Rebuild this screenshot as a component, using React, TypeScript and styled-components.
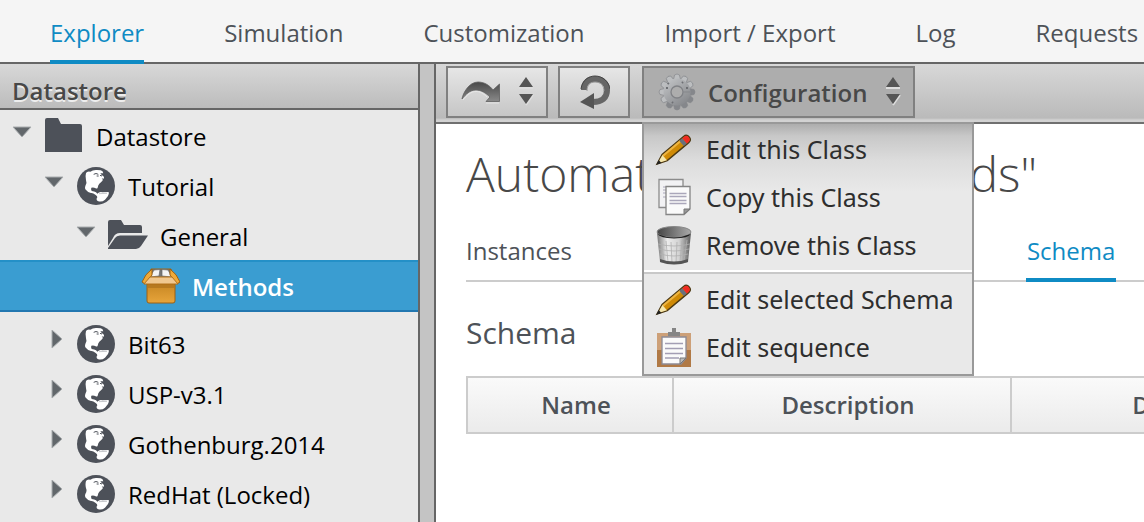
import React from 'react';
import styled, { createGlobalStyle, css } from 'styled-components';

const GlobalStyle = createGlobalStyle`
  * { box-sizing: border-box; }
  body {
    margin: 0;
    overflow: hidden;
    background: #fff;
    color: #4d5258;
    font-family: 'Open Sans', 'Noto Sans', sans-serif;
    font-size: 24px;
    line-height: 32px;
  }
  svg { display: block; flex: none; }
  button { font: inherit; color: inherit; }
`;

const Page = styled.div`
  display: flex;
  flex-direction: column;
  min-height: 100vh;
`;

const Nav = styled.nav`
  display: flex;
  gap: 80px;
  height: 64px;
  padding-left: 50px;
  background: #f5f5f5;
  border-bottom: 2px solid #666;
  white-space: nowrap;
`;

const NavLink = styled.a<{ $active?: boolean }>`
  flex: none;
  height: 64px;
  padding-top: 17px;
  text-decoration: none;
  color: ${(p) => (p.$active ? '#0f8bc4' : '#4d5258')};
  border-bottom: ${(p) => (p.$active ? '4px solid #0f8bc4' : '0')};
`;

const Workspace = styled.div`
  display: flex;
  flex: 1;
`;

const Sidebar = styled.aside`
  flex: none;
  width: 420px;
  background: #e9e9e9;
  border-right: 2px solid #666;
`;

const SidebarTitle = styled.h2`
  margin: 0;
  height: 46px;
  padding: 8px 12px 0;
  font-size: 24px;
  font-weight: 600;
  line-height: 38px;
  color: #484848;
  text-shadow: 0 2px 0 #eee;
  background: linear-gradient(#d8d8d8, #bcbcbc);
  border-bottom: 2px solid #666;
`;

const Splitter = styled.div`
  flex: none;
  width: 16px;
  background: #c4c4c4;
  border-right: 2px solid #666;
`;

const Tree = styled.ul`
  margin: 0;
  padding: 0;
  list-style: none;
`;

const TreeRow = styled.li<{ $level: number; $selected?: boolean }>`
  display: flex;
  align-items: center;
  gap: 12px;
  height: 50px;
  padding: 2px 0 0 ${(p) => 12 + p.$level * 32}px;
  color: #000;
  ${(p) =>
    p.$selected &&
    css`
      height: 52px;
      padding-top: 0;
      margin-bottom: 6px;
      color: #fff;
      font-weight: 600;
      background: #3a9dd1;
      border-top: 2px solid #2490c7;
      border-bottom: 2px solid #2277b0;
    `}
`;

const TreeLabel = styled.span`
  padding-top: 2px;
`;

const Twisty = styled.span`
  width: 20px;
  height: 28px;
`;

const Main = styled.main`
  flex: 1;
  min-width: 0;
  overflow: hidden;
`;

const Toolbar = styled.div`
  display: flex;
  gap: 10px;
  height: 60px;
  padding: 2px 10px 0;
  background: linear-gradient(#d8d8d8, #bababa 54px, #d2d2d2 56px);
  border-bottom: 2px solid #707070;
`;

const ToolButton = styled.button<{ $open?: boolean }>`
  display: flex;
  align-items: center;
  gap: 18px;
  height: 52px;
  padding: 0 12px;
  border: 2px solid #808080;
  border-radius: 0;
  background: ${(p) => (p.$open ? '#adadad' : 'linear-gradient(#e6e6e6, #c6c6c6)')};
  color: #484848;
  font-weight: 600;
`;

const ReloadButton = styled(ToolButton)`
  padding: 0 18px;
`;

const MenuAnchor = styled.div`
  position: relative;
  margin-left: 2px;
`;

const ButtonLabel = styled.span`
  margin: 2px 0 0 -6px;
`;

const Menu = styled.div`
  position: absolute;
  z-index: 2;
  top: 56px;
  left: 0;
  width: 332px;
  padding: 2px 0;
  border: 2px solid #999;
  background: linear-gradient(#adadad, #c8c8c8 12px, #dcdcdc 36px, #e9e9e9 68px);
`;

const MenuItem = styled.button`
  display: flex;
  align-items: center;
  gap: 12px;
  width: 100%;
  height: 48px;
  padding: 0 10px 2px;
  border: 0;
  background: none;
  color: #2e2e2e;
  font-family: 'Noto Sans', 'Open Sans', sans-serif;
  font-size: 25px;
  white-space: nowrap;
`;

const MenuDivider = styled.hr`
  height: 4px;
  margin: 0 0 2px;
  border: 0;
  border-top: 2px solid #fff;
  border-bottom: 2px solid #c8c8c8;
`;

const Content = styled.section`
  padding: 18px 0 0 30px;
`;

const Title = styled.h1`
  margin: 0;
  font-size: 48px;
  font-weight: 300;
  line-height: 64px;
  color: #484848;
  white-space: nowrap;
`;

const Tabs = styled.div`
  display: flex;
  gap: 454px;
  height: 47px;
  margin-top: 29px;
  border-bottom: 2px solid #ccc;
`;

const Tab = styled.a<{ $active?: boolean }>`
  height: 47px;
  padding: 0 ${(p) => (p.$active ? 1 : 0)}px;
  text-decoration: none;
  color: ${(p) => (p.$active ? '#0f8bc4' : '#4d5258')};
  border-bottom: ${(p) => (p.$active ? '4px solid #0f8bc4' : '0')};
`;

const SectionTitle = styled.h2`
  margin: 31px 0 23px;
  font-size: 30px;
  font-weight: 400;
  line-height: 40px;
`;

const SchemaTable = styled.table`
  width: 862px;
  table-layout: fixed;
  border-collapse: collapse;
`;

const HeadCell = styled.th<{ $width?: number }>`
  width: ${(p) => (p.$width ? p.$width + 'px' : 'auto')};
  height: 56px;
  padding: 0 0 0 12px;
  border: 2px solid #ccc;
  background: linear-gradient(#fafafa, #ebebeb);
  font-weight: 600;
`;

const Arrow = ({ open }: { open?: boolean }) => (
  <svg width="20" height="20" viewBox="0 0 20 20">
    <path d={open ? 'M1 5H19L10 15Z' : 'M8 0V18L18 9Z'} fill="#62676b" stroke="#a9adaf" strokeWidth="1" />
  </svg>
);

const Folder = () => (
  <svg width="40" height="40" viewBox="0 0 40 40">
    <path d="M1 4Q1 2 3 2H14L17 8H36Q38 8 38 10V36H1Z" fill="#4d5159" />
  </svg>
);

const OpenFolder = () => (
  <svg width="40" height="40" viewBox="0 0 40 40">
    <path d="M0 6Q0 4 2 4H13L16 9H32Q34 9 34 11V17H12Q7 17 5 22L0 30Z" fill="#4d5159" />
    <path d="M0 33V32L7 22Q8.500 19.500 12 19.500H40L33 30Q31 33 28 33Z" fill="#4d5159" />
  </svg>
);

const Globe = () => (
  <svg width="40" height="40" viewBox="-3 -3 120 120">
    <circle cx="57" cy="57" r="57" fill="#4d5159" />
    <path
      d="M27 18Q30 12 40 14Q48 8 60 9L71 10Q78 12 79 19L70 19L75 25Q84 30 80 35L74 34Q80 38 75 43L67 50Q63 55 62 62Q60 66 56 64Q50 60 43 62Q41 66 44 72Q52 73 57 76L61 80Q68 73 76 76L95 75Q97 80 93 87L84 98Q74 107 62 102Q56 98 61 91Q61 86 55 83Q48 77 42 78Q32 76 28 70Q22 66 25 57Q31 48 27 40Q24 28 27 18Z"
      fill="#fff"
    />
    <path d="M50 22Q57 17 64 22M59 27H65M69 25L75 27" fill="none" stroke="#4d5159" strokeWidth="3" />
    <path d="M66 80L90 79" stroke="#aaaeb2" strokeWidth="2" />
  </svg>
);

const Box = () => (
  <svg width="40" height="40" viewBox="0 0 40 40">
    <defs>
      <linearGradient id="boxFront" x2="0" y2="1">
        <stop offset="0" stopColor="#c88724" />
        <stop offset="1" stopColor="#e7a53b" />
      </linearGradient>
    </defs>
    <path d="M11 3H31L35 13H8Z" fill="#777" stroke="#a26311" />
    <path d="M14 4L20 3.500L19 10L10 11ZM22 3.500L28 4L32 11L22 10Z" fill="#f4f4f4" stroke="#666" strokeWidth=".7" />
    <path d="M12 3Q5 8 2 16L5 18L12 9ZM30 3Q37 8 40 16L37 18L30 9Z" fill="#efaa38" stroke="#9c6112" />
    <path d="M7 18H35V35Q35 37 33 37H9Q7 37 7 35Z" fill="url(#boxFront)" stroke="#9c6112" />
    <path d="M10 11H32L38 18H4Z" fill="#f0c890" stroke="#b4731b" />
    <path d="M8 19H34V22H8Z" fill="#a96e1b" opacity=".6" />
  </svg>
);

const UpDown = () => (
  <svg width="16" height="32" viewBox="0 0 16 32">
    <path d="M1 12H15M8 29L15 19" stroke="#ddd" strokeWidth="2" />
    <path d="M8 1L15 11H1ZM1 18H15L8 28Z" fill="#555" />
  </svg>
);

const Forward = () => (
  <svg width="40" height="26" viewBox="0 0 40 26">
    <defs>
      <linearGradient id="arrowFill" x2="0" y2="1">
        <stop offset="0" stopColor="#484848" />
        <stop offset="1" stopColor="#8a8a8a" />
      </linearGradient>
    </defs>
    <path d="M2 20C3 14 9 3 18 3C25 3 30 7 33 11L39.500 5V22.500H26L30 18C26 14 21 11 16 11C10 11 6 15 2 20Z" fill="url(#arrowFill)" stroke="#606060" strokeWidth=".8" />
    <path d="M3 21C7 16 11 12.500 16 12.500C20 12.500 23 14 27 18M26 24H39" fill="none" stroke="#eee" opacity=".7" />
  </svg>
);

const Reload = () => (
  <svg width="32" height="38" viewBox="-1 -1 32 38">
    <path d="M5 16C5 8 10 5 16 5C24 5 28 10 28 16C28 24 23 28 14 28" fill="none" stroke="#666" strokeWidth="6" />
    <path d="M1 28L15 19V35Z" fill="#555" />
    <path d="M2 15C3 6 10 2 16 2C24 2 30 8 31 15" fill="none" stroke="#444" />
    <path d="M8 17C8 11 11 8 16 8C22 8 25 12 25 17" fill="none" stroke="#999" />
  </svg>
);

const teeth = Array.from({ length: 12 }, (_, i) => i * 30);

const Gear = () => (
  <svg width="40" height="40" viewBox="-21 -20 40 40">
    <defs>
      <linearGradient id="gearFill" gradientUnits="userSpaceOnUse" x1="-12" y1="-16" x2="12" y2="16">
        <stop offset="0" stopColor="#c8cacc" />
        <stop offset="1" stopColor="#7c7e82" />
      </linearGradient>
    </defs>
    {teeth.map((a) => (
      <path key={a} transform={`rotate(${a})`} d="M-3.500 -12L-2.500 -17Q0 -19 2.500 -17L3.500 -12Z" fill={a > 60 && a < 240 ? '#85878b' : '#bcbec0'} stroke="#85878b" strokeWidth=".7" />
    ))}
    <circle r="13.500" fill="url(#gearFill)" />
    <circle r="6" fill="#adadad" stroke="#808286" strokeWidth="1.300" />
    <path d="M6 0H13" stroke="#85878b" />
    <path d="M-9.500 -9L-8 -8M5 -9L6 -10M-11 -4H-9M-5 10L-4 11M9 -4H11" stroke="#6d6f73" strokeWidth="2" />
  </svg>
);

const Pencil = () => (
  <svg width="40" height="40" viewBox="0 0 40 40">
    <g transform="translate(3 35) rotate(-40)">
      <path d="M0 0L10 -4H38Q42 -4 42 0Q42 4 38 4H10Z" fill="#cf8a06" stroke="#4d3a14" strokeWidth="1.400" />
      <path d="M10 -3.500H33V-1.500H10Z" fill="#eeb440" />
      <path d="M32 -3.500H36V3.500H32Z" fill="#68707c" />
      <path d="M36 -3.500H38Q41.500 -3.500 41.500 0Q41.500 3.500 38 3.500H36Z" fill="#f02b23" />
      <path d="M1 0L10 -3.500V3.500Z" fill="#f5e6ad" />
      <path d="M-1 0L4 -2V2Z" fill="#222" />
    </g>
  </svg>
);

const Copy = () => (
  <svg width="40" height="40" viewBox="0 0 40 40">
    <path d="M5 2.500H29V30.500H5Z" fill="#f2f2f4" stroke="#8b8b8b" strokeWidth="1.300" />
    <path d="M9 10H25M9 13H25M9 16H25M9 20H15" stroke="#aaa7ba" />
    <path d="M12 9.500H36V32L30 37.500H12Z" fill="#fafafa" stroke="#858585" strokeWidth="1.300" />
    <path d="M15.500 16.500H32.500M15.500 19.500H32.500M15.500 23.500H32.500M15.500 26.500H32.500" stroke="#aaa7ba" strokeWidth="1.300" />
    <path d="M30 37V32H36Z" fill="#999" stroke="#777" />
  </svg>
);

const Trash = () => (
  <svg width="40" height="40" viewBox="0 -1 40 40">
    <defs>
      <linearGradient id="trashFill">
        <stop offset="0" stopColor="#777" />
        <stop offset=".3" stopColor="#ececec" />
        <stop offset=".65" stopColor="#d2d2d2" />
        <stop offset="1" stopColor="#5c5c5c" />
      </linearGradient>
      <linearGradient id="trashLid">
        <stop offset="0" stopColor="#444" />
        <stop offset="1" stopColor="#aaa" />
      </linearGradient>
    </defs>
    <path d="M3 7H37L34 36Q20 41 6 36Z" fill="url(#trashFill)" />
    <path d="M7 14L10 35M12 15L14 36M17 16L18 37M23 16L22 37M28 15L26 36M33 14L30 35M4 18Q20 22 36 18M5 23Q20 27 35 23M6 28Q20 32 34 28" fill="none" stroke="#b0b0b0" strokeWidth=".8" />
    <path d="M6 33Q20 38 34 33L34 36Q20 41 6 36Z" fill="#555" />
    <ellipse cx="20" cy="6" rx="17" ry="5.500" fill="url(#trashLid)" stroke="#888" />
    <path d="M3.500 8Q20 15 36.500 8Q35 12 20 12.500Q6 12 3.500 8Z" fill="#222" />
  </svg>
);

const Clipboard = () => (
  <svg width="40" height="40" viewBox="0 -1 40 40">
    <path d="M3 5H37V39H3Z" fill="#cda078" />
    <path d="M3 22H37V39H3Z" fill="#b07945" />
    <path d="M8 9H32V30L27 36H8Z" fill="#fafafa" stroke="#8d8b95" strokeWidth="1.300" />
    <path d="M14 8V4H18V0H22V4H26V8Z" fill="#858585" />
    <path d="M11 15.500H29M11 20.500H29M11 25.500H29M11 30H25" stroke="#a39eb4" strokeWidth="1.300" />
    <path d="M26 36V30H32Z" fill="#bbb" stroke="#777" />
  </svg>
);

type Node = { name: string; level: number; icon: React.ReactNode; open?: boolean; leaf?: boolean };

const nodes: Node[] = [
  { name: 'Datastore', level: 0, icon: <Folder />, open: true },
  { name: 'Tutorial', level: 1, icon: <Globe />, open: true },
  { name: 'General', level: 2, icon: <OpenFolder />, open: true },
  { name: 'Methods', level: 3, icon: <Box />, leaf: true },
  { name: 'Bit63', level: 1, icon: <Globe /> },
  { name: 'USP-v3.1', level: 1, icon: <Globe /> },
  { name: 'Gothenburg.2014', level: 1, icon: <Globe /> },
  { name: 'RedHat (Locked)', level: 1, icon: <Globe /> },
];

const sections = ['Explorer', 'Simulation', 'Customization', 'Import / Export', 'Log', 'Requests'];

export default function App() {
  return (
    <Page>
      <GlobalStyle />
      <Nav>
        {sections.map((s, i) => (
          <NavLink key={s} href="#" $active={i === 0}>{s}</NavLink>
        ))}
      </Nav>
      <Workspace>
        <Sidebar>
          <SidebarTitle>Datastore</SidebarTitle>
          <Tree>
            {nodes.map((n) => (
              <TreeRow key={n.name} $level={n.level} $selected={n.leaf}>
                <Twisty>{!n.leaf && <Arrow open={n.open} />}</Twisty>
                {n.icon}
                <TreeLabel>{n.name}</TreeLabel>
              </TreeRow>
            ))}
          </Tree>
        </Sidebar>
        <Splitter />
        <Main>
          <Toolbar>
            <ToolButton aria-label="Forward">
              <Forward />
              <UpDown />
            </ToolButton>
            <ReloadButton aria-label="Reload">
              <Reload />
            </ReloadButton>
            <MenuAnchor>
              <ToolButton $open aria-expanded="true">
                <Gear />
                <ButtonLabel>Configuration</ButtonLabel>
                <UpDown />
              </ToolButton>
              <Menu>
                <MenuItem><Pencil />Edit this Class</MenuItem>
                <MenuItem><Copy />Copy this Class</MenuItem>
                <MenuItem><Trash />Remove this Class</MenuItem>
                <MenuDivider />
                <MenuItem><Pencil />Edit selected Schema</MenuItem>
                <MenuItem><Clipboard />Edit sequence</MenuItem>
              </Menu>
            </MenuAnchor>
          </Toolbar>
          <Content>
            <Title>Automation Set "Methods"</Title>
            <Tabs>
              <Tab href="#">Instances</Tab>
              <Tab href="#" $active>Schema</Tab>
            </Tabs>
            <SectionTitle>Schema</SectionTitle>
            <SchemaTable>
              <thead>
                <tr>
                  <HeadCell $width={206}>Name</HeadCell>
                  <HeadCell $width={338}>Description</HeadCell>
                  <HeadCell>Default</HeadCell>
                </tr>
              </thead>
            </SchemaTable>
          </Content>
        </Main>
      </Workspace>
    </Page>
  );
}
